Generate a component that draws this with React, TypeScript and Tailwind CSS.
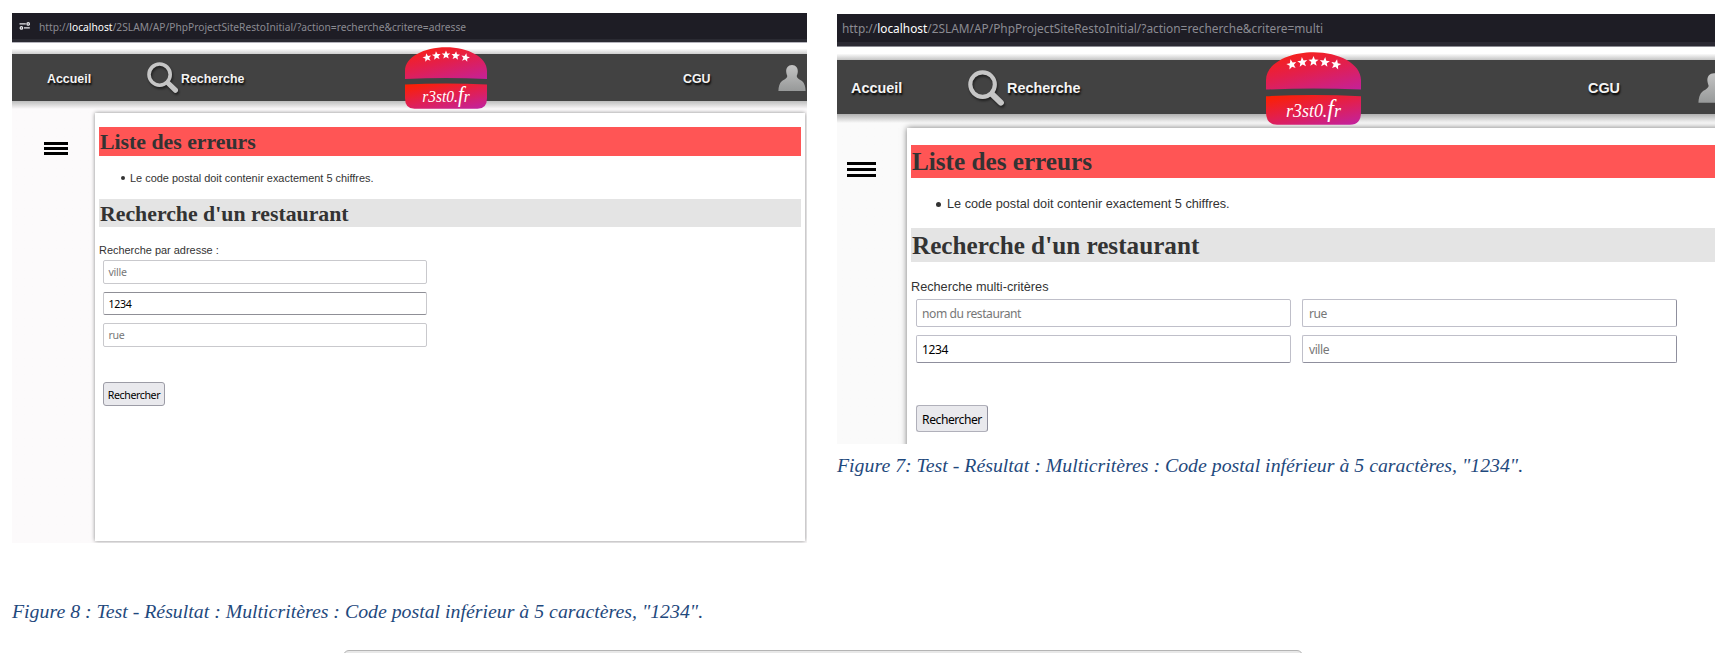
import React from "react";

function Magnifier({ className }: { className: string }) {
  return (
    <svg viewBox="0 0 32 32" className={`${className} drop-shadow-[1px_2px_1px_rgba(0,0,0,0.5)]`} fill="none">
      <circle cx="12.600" cy="12.600" r="10.600" stroke="#c6c6c6" strokeWidth="3.600" />
      <path d="M21 21 L28.400 28.200" stroke="#c6c6c6" strokeWidth="5.200" strokeLinecap="round" />
    </svg>
  );
}

function Person({ className, id }: { className: string; id: string }) {
  return (
    <svg viewBox="0 0 28 28" className={className}>
      <defs>
        <linearGradient id={id} x1="0" y1="0" x2="0" y2="1">
          <stop offset="0" stopColor="#c4c4c4" />
          <stop offset="1" stopColor="#979999" />
        </linearGradient>
      </defs>
      <path
        d="M14 1 C10 1 8 4 8.2 7.500 C8.300 9.500 9 11 9.300 12 C9 14.500 6 15.500 4 17 C1.500 19 .5 23 .4 27 H27.600 C27.500 23 26.500 19 24 17 C22 15.500 19 14.500 18.700 12 C19 11 19.700 9.500 19.800 7.500 C20 4 18 1 14 1 Z"
        fill={`url(#${id})`}
      />
    </svg>
  );
}

const star = "M0 -4.700 L1.250 -1.500 L4.500 -1.400 L1.950 .7 L2.800 3.900 L0 2.100 L-2.800 3.900 L-1.950 .7 L-4.500 -1.400 L-1.250 -1.500 Z";
const stars = [
  [25.6, 12.5, -12],
  [36.4, 10.2, -6],
  [47.5, 9.3, 0],
  [58.7, 10.2, 6],
  [70, 12.5, 12],
];

function Logo({ className, id }: { className: string; id: string }) {
  return (
    <svg viewBox="0 0 95 73" preserveAspectRatio="none" className={className}>
      <defs>
        <linearGradient id={`${id}a`} x1="0.1" y1="0" x2="0.8" y2="1.15">
          <stop offset="0" stopColor="#fb2010" />
          <stop offset="0.45" stopColor="#e31f4c" />
          <stop offset="1" stopColor="#c3219c" />
        </linearGradient>
        <linearGradient id={`${id}b`} x1="0.1" y1="0" x2="0.85" y2="1.1">
          <stop offset="0" stopColor="#fc2000" />
          <stop offset="0.5" stopColor="#e11f52" />
          <stop offset="1" stopColor="#c022a2" />
        </linearGradient>
      </defs>
      <path d="M0 36 H95 V47 H0 Z" fill="#424242" />
      <path d="M0 37.600 V28 C0 12 22 0.300 47.500 0.300 C73 0.300 95 12 95 28 V37.600 Q47.500 35.400 0 37.600 Z" fill={`url(#${id}a)`} />
      <path d="M0 44.200 Q47.500 41.600 95 44.200 V60 Q95 72.700 84 72.700 H11 Q0 72.700 0 60 Z" fill={`url(#${id}b)`} />
      {stars.map(([x, y, r]) => (
        <path key={x} d={star} transform={`translate(${x} ${y}) rotate(${r}) scale(1.12)`} fill="#fff" />
      ))}
      <text
        x="20"
        y="65"
        fill="#fff"
        fontFamily="Liberation Serif, serif"
        fontStyle="italic"
        fontWeight="400"
        fontSize="19.500"
        textLength="55"
        lengthAdjust="spacingAndGlyphs"
        className="[text-shadow:none]"
      >
        r3st0.<tspan fontSize="26">f</tspan>r
      </text>
    </svg>
  );
}

function SiteIcon() {
  return (
    <svg viewBox="0 0 12 8" className="mr-[8px] h-[8px] w-[12px]" fill="none" stroke="#e8e8ec" strokeWidth="1.300">
      <path d="M0.500 1.800 H6.800 M5 5.800 H10.800" />
      <circle cx="9.200" cy="1.900" r="1.200" />
      <circle cx="2.400" cy="5.900" r="1.200" />
    </svg>
  );
}

function LeftShot() {
  return (
    <div className="flex h-[530px] w-[795px] flex-col overflow-hidden bg-[#fcfafb]">
      <div className="flex h-[29px] shrink-0 items-center border-b-[3px] border-[#2a2a32] bg-[#1e1d25] pl-[7px]">
        <SiteIcon />
        <span className="whitespace-nowrap pt-[1px] font-['Noto_Sans'] text-[10.23px] leading-[26px] text-[#8b8b92]">
          http://<span className="text-white">localhost</span>/2SLAM/AP/PhpProjectSiteRestoInitial/?action=recherche&amp;critere=adresse
        </span>
      </div>
      <div className="h-[12px] shrink-0 border-t border-[#b4b3bb] bg-linear-to-b from-white from-50% to-[#cfcfcf]" />
      <div className="relative z-10 flex h-[47px] shrink-0 items-center bg-[#424242] font-['Liberation_Sans'] text-[12.4px] font-bold text-[#f4f4f4] [text-shadow:1px_2px_2px_#000]">
        <span className="ml-[35px] w-[100px] pt-[3px]">Accueil</span>
        <Magnifier className="mt-[1px] h-[32px] w-[32px]" />
        <span className="ml-[2px] w-[224px] pt-[3px]">Recherche</span>
        <Logo id="l" className="mt-[1px] h-[62px] w-[82px] shrink-0" />
        <span className="ml-[196px] w-[95px] shrink-0 pt-[3px]">CGU</span>
        <Person id="pl" className="mt-[1px] h-[28px] w-[28px] shrink-0" />
      </div>
      <div className="flex flex-1 bg-linear-to-b from-[#bdbdbd] to-[#fcfafb] to-[8px] pt-[12px]">
        <div className="w-[83px] shrink-0 pl-[32px] pt-[29px]">
          <div className="flex w-[24px] flex-col gap-[2px]">
            <div className="h-[3px] bg-black" />
            <div className="h-[3px] bg-black" />
            <div className="h-[3px] bg-black" />
          </div>
        </div>
        <div className="h-[428px] w-[710px] bg-white pl-[4px] pt-[14px] font-['Liberation_Sans'] text-[#333] shadow-[0_0_4px_#888]">
          <h1 className="h-[29px] w-[702px] bg-[#ff5555] pl-px font-['Liberation_Serif'] text-[21.8px] leading-[30px] font-bold">Liste des erreurs</h1>
          <ul className="mt-[14px] pl-[21px] text-[10.95px] leading-[16px]">
            <li className="flex items-center">
              <span className="mr-[5px] ml-px size-[4px] rounded-full bg-[#333]" />
              Le code postal doit contenir exactement 5 chiffres.
            </li>
          </ul>
          <h1 className="mt-[13px] h-[28px] w-[702px] bg-[#e4e4e4] pl-px font-['Liberation_Serif'] text-[21.8px] leading-[30px] font-bold">Recherche d'un restaurant</h1>
          <p className="mt-[15px] h-[18px] text-[10.95px] leading-[16px]">Recherche par adresse :</p>
          <div className="ml-[4px] flex w-[324px] flex-col gap-[8px] font-['Noto_Sans'] text-[10.6px] tracking-[-0.3px] text-[#777]">
            <div className="h-[23.500px] rounded-[2px] border border-[#c9c9cd] pl-[4.500px] leading-[23px]">ville</div>
            <div className="h-[23.500px] rounded-[2px] border border-[#c9c9cd] border-y-[#8f8f96] pl-[4.500px] leading-[23px] text-black">1234</div>
            <div className="h-[23.500px] rounded-[2px] border border-[#c9c9cd] pl-[4.500px] leading-[23px]">rue</div>
          </div>
          <button className="mt-[35px] ml-[4px] block h-[24px] w-[62px] rounded-[3px] border border-[#9c9ca6] bg-[#e9e9ed] text-center font-['Noto_Sans'] text-[10.6px] leading-[24px] tracking-[-0.4px] text-black">Rechercher</button>
        </div>
      </div>
    </div>
  );
}

function RightShot() {
  return (
    <div className="flex h-[430px] w-[878px] flex-col overflow-hidden bg-[#fafafa]">
      <div className="flex h-[32px] shrink-0 items-center border-b-[4px] border-[#2b2a33] bg-[#1e1d25] pl-[5px]">
        <span className="whitespace-nowrap pt-[1px] font-['Noto_Sans'] text-[11.86px] leading-[27px] text-[#8b8b92]">
          http://<span className="text-white">localhost</span>/2SLAM/AP/PhpProjectSiteRestoInitial/?action=recherche&amp;critere=multi
        </span>
      </div>
      <div className="h-[14px] shrink-0 border-t border-[#8b8b92] bg-linear-to-b from-white from-50% to-[#c4c4c4]" />
      <div className="relative z-10 flex h-[54px] shrink-0 items-center bg-[#424242] font-['Liberation_Sans'] text-[14.4px] font-bold text-[#f4f4f4] [text-shadow:1px_2px_2px_#000]">
        <span className="ml-[14px] w-[117px] shrink-0 pt-[4px]">Accueil</span>
        <Magnifier className="mt-[2px] h-[37px] w-[37px] shrink-0" />
        <span className="ml-[2px] w-[259px] shrink-0 pt-[4px]">Recherche</span>
        <Logo id="r" className="relative top-[1px] h-[73px] w-[95px] shrink-0" />
        <span className="ml-[227px] w-[110px] shrink-0 pt-[4px]">CGU</span>
        <Person id="pr" className="mt-[2px] h-[32px] w-[32px] shrink-0" />
      </div>
      <div className="flex flex-1 bg-linear-to-b from-[#b0b0b0] to-[#fafafa] to-[9px] pt-[14px]">
        <div className="w-[70px] shrink-0 pl-[10px] pt-[34px]">
          <div className="flex w-[29px] flex-col gap-[3px]">
            <div className="h-[3px] bg-black" />
            <div className="h-[3px] bg-black" />
            <div className="h-[3px] bg-black" />
          </div>
        </div>
        <div className="h-[330px] w-[820px] shrink-0 bg-white pl-[4px] pt-[17px] font-['Liberation_Sans'] text-[#333] shadow-[0_0_6px_#777]">
          <h1 className="h-[33px] bg-[#ff5555] pl-px font-['Liberation_Serif'] text-[25.2px] leading-[33px] font-bold">Liste des erreurs</h1>
          <ul className="mt-[17px] pl-[24px] text-[12.7px] leading-[18px]">
            <li className="flex items-center">
              <span className="mr-[6px] ml-px size-[5px] rounded-full bg-[#333]" />
              Le code postal doit contenir exactement 5 chiffres.
            </li>
          </ul>
          <h1 className="mt-[15px] h-[34px] bg-[#e4e4e4] pl-px font-['Liberation_Serif'] text-[25.2px] leading-[35px] font-bold">Recherche d'un restaurant</h1>
          <p className="mt-[16px] h-[21px] text-[12.7px] leading-[18px]">Recherche multi-critères</p>
          <div className="ml-[5px] grid w-[761px] grid-cols-2 gap-x-[11px] gap-y-[8px] font-['Noto_Sans'] text-[12.1px] leading-[28px] tracking-[-0.45px] text-[#777]">
            <div className="h-[28px] rounded-[2px] border border-[#bfbfc9] pl-[5px]">nom du restaurant</div>
            <div className="h-[28px] rounded-[2px] border border-[#bfbfc9] border-r-[#8f8f9d] pl-[6px]">rue</div>
            <div className="h-[28px] rounded-[2px] border border-[#bfbfc9] border-b-[#8f8f9d] pl-[5px] text-black">1234</div>
            <div className="h-[28px] rounded-[2px] border border-[#bfbfc9] border-r-[#8f8f9d] border-b-[#8f8f9d] pl-[6px]">ville</div>
          </div>
          <button className="mt-[42px] ml-[5px] block h-[27px] w-[72px] rounded-[3px] border border-[#b0b0ba] border-r-[#8f8f9d] bg-[#e9e9ed] text-center font-['Noto_Sans'] text-[12.1px] leading-[27px] tracking-[-0.45px] text-black">Rechercher</button>
        </div>
      </div>
    </div>
  );
}

export default function App() {
  return (
    <div className="flex h-[653px] w-[1733px] flex-col overflow-hidden bg-white">
      <div className="flex h-[650px] shrink-0 gap-[30px] pl-[12px]">
        <figure className="flex w-[795px] shrink-0 flex-col pt-[13px]">
          <LeftShot />
          <figcaption className="mt-[56px] whitespace-nowrap font-['Liberation_Serif'] text-[19.82px] leading-[24px] text-[#1f497d] italic">
            Figure 8 : Test - Résultat : Multicritères : Code postal inférieur à 5 caractères, "1234".
          </figcaption>
        </figure>
        <figure className="flex w-[878px] shrink-0 flex-col pt-[14px]">
          <RightShot />
          <figcaption className="mt-[9px] whitespace-nowrap font-['Liberation_Serif'] text-[19.82px] leading-[24px] text-[#1f497d] italic">
            Figure 7: Test - Résultat : Multicritères : Code postal inférieur à 5 caractères, "1234".
          </figcaption>
        </figure>
      </div>
      <div className="ml-[343px] h-[20px] w-[960px] shrink-0 rounded-t-[6px] border border-[#b4b4b4] bg-[#e8e8e8]" />
    </div>
  );
}
